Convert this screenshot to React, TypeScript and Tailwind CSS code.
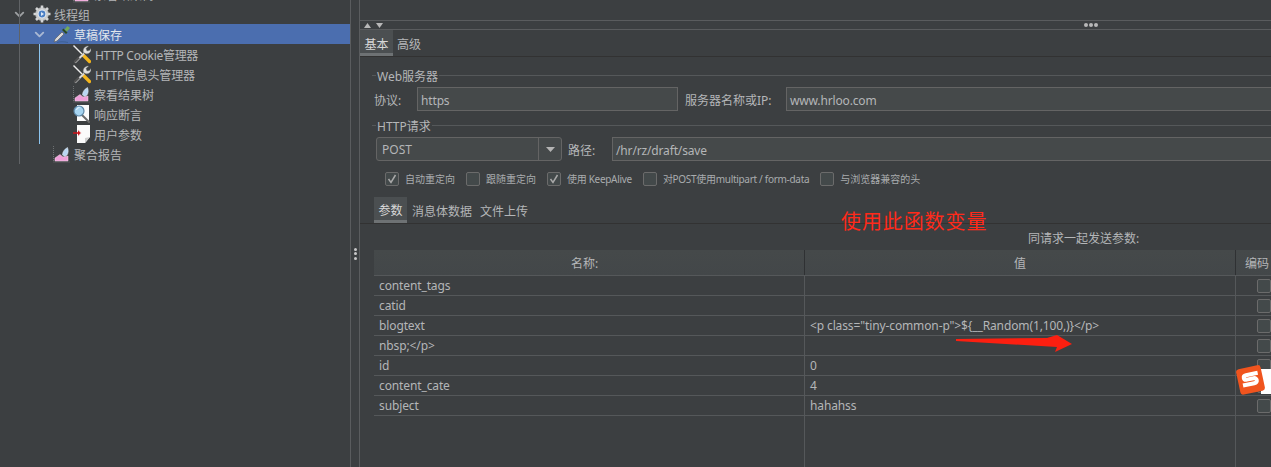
import { ChevronDown } from "lucide-react";

const font = "font-['Noto_Sans','Noto_Sans_CJK_SC',sans-serif]";

function GearIcon() {
  return (
    <svg width="18" height="18" viewBox="0 0 18 18">
      <circle cx="9" cy="9" r="6.6" fill="#c9cbcc" stroke="#8b8d8f" strokeWidth="0.6" />
      <g stroke="#d4d5d6" strokeWidth="2.6">
        <path d="M9 0.5v3M9 14.5v3M0.5 9h3M14.5 9h3M3 3l2 2M13 13l2 2M15 3l-2 2M5 13l-2 2" />
      </g>
      <circle cx="9" cy="9" r="4.4" fill="#e9eef4" />
      <circle cx="9" cy="9" r="3.4" fill="#4b7fc4" />
      <path d="M8 7l3 2-3 2z" fill="#dfe9f6" />
    </svg>
  );
}

function DropperIcon() {
  return (
    <svg width="18" height="18" viewBox="0 0 18 18">
      <path d="M1 17l1-3 7-7 2 2-7 7z" fill="#d8d8d8" stroke="#555" strokeWidth="0.6" />
      <path d="M9 5l4 4 1.5-1.5-4-4z" fill="#2e4a22" />
      <path d="M11.5 4.5l3-3.5 2.5 2-3 3.5z" fill="#72a85a" />
      <path d="M4 17.5c3-1 7-1 11 0" stroke="#3c5f94" fill="none" strokeWidth="1" />
    </svg>
  );
}

function ToolsIcon() {
  return (
    <svg width="18" height="19" viewBox="0 0 18 19">
      <path d="M0.500 0.500l9.500 9.500" stroke="#ececec" strokeWidth="1.400" />
      <path d="M10 10l6.500 6.500" stroke="#f3b51c" strokeWidth="3.200" strokeLinecap="round" />
      <path d="M8.500 10.500l2-2" stroke="#2b2b2b" strokeWidth="1.400" />
      <path d="M2 17.500l9-9" stroke="#d6d6d6" strokeWidth="2" />
      <path d="M1.500 17l4.500-4.500" stroke="#505050" strokeWidth="2.400" />
      <path d="M10.500 7.500c-1-3 1-6.500 5-6.500l-2.500 2.500 1 2.500 2.500-.5 1.500-2c.5 3.500-2.500 6-5.500 5z" fill="#dedede" stroke="#7c7c7c" strokeWidth="0.400" />
    </svg>
  );
}

function ChartIcon() {
  return (
    <svg width="18" height="18" viewBox="0 0 18 18">
      <path d="M0.500 1v16H17" stroke="#6d7072" strokeWidth="1" fill="none" strokeDasharray="1 1" />
      <path d="M2 16v-3l5-3.500 3 2.500 5-1v5z" fill="#ee9fd8" stroke="#f9d7ef" strokeWidth="0.500" />
      <path d="M9.500 10c0-3 1.500-5.500 5-7.500 1 2.500 1 5.500-.5 7.500-1.500 1.500-3 1.500-4.500 0z" fill="#b9d6f2" stroke="#e8f2fb" strokeWidth="0.500" />
    </svg>
  );
}

function SearchIcon() {
  return (
    <svg width="18" height="18" viewBox="0 0 18 18">
      <path d="M4 0h12v16H4z" fill="#fbfbfb" />
      <path d="M9 10l7 7" stroke="#6b6b6b" strokeWidth="2" strokeLinecap="round" />
      <circle cx="6" cy="6" r="5" fill="#a6d4f0" stroke="#5e87a6" strokeWidth="1.2" />
      <path d="M3.500 5a3 3 0 0 1 3-2.500" stroke="#eaf6fd" strokeWidth="1" fill="none" />
    </svg>
  );
}

function PageIcon() {
  return (
    <svg width="18" height="18" viewBox="0 0 18 18">
      <path d="M4 0h13v12l-5 6H4z" fill="#fbfbfb" />
      <path d="M17 12l-5 6v-5z" fill="#cfcfcf" />
      <path d="M0 8h6" stroke="#c8141c" strokeWidth="1.600" />
      <path d="M5 4.500l3.500 3.500L5 11.500z" fill="#e9b3b6" />
      <path d="M5 5.500l2.500 2.500L5 10.500z" fill="#c8141c" />
    </svg>
  );
}

function TreeRow({ pad, icon, label, active, chevron, gap }: { pad: string; icon: React.ReactNode; label: string; active?: boolean; chevron?: boolean; gap?: string }) {
  return (
    <div className={`flex h-5 items-center whitespace-nowrap text-[12px] text-[#b4b6b8] ${pad} ${active ? "bg-[#4b6eaf]" : ""}`}>
      {chevron && <ChevronDown size={15} strokeWidth={3} className={`mr-[6px] ${active ? "text-[#a9b8d3]" : "text-[#9da0a2]"}`} />}
      {icon}
      <span className={`pt-[4px] leading-4 ${gap ?? "ml-[3px]"} ${active ? "text-[#e2e6ec]" : ""}`}>{label}</span>
    </div>
  );
}

function Sidebar() {
  return (
    <div className="relative h-full w-[350px] shrink-0 overflow-hidden">
      <div className="-mt-4">
        <TreeRow pad="pl-[73px]" icon={<ChartIcon />} label="察看结果树" />
        <TreeRow pad="pl-[12px]" chevron icon={<GearIcon />} label="线程组" />
        <TreeRow pad="pl-[32px]" chevron active icon={<DropperIcon />} label="草稿保存" />
        <TreeRow pad="pl-[73px]" icon={<ToolsIcon />} label="HTTP Cookie管理器" gap="ml-[4px] tracking-[-0.300px]" />
        <TreeRow pad="pl-[73px]" icon={<ToolsIcon />} label="HTTP信息头管理器" gap="ml-[4px] tracking-[-0.200px]" />
        <TreeRow pad="pl-[73px]" icon={<ChartIcon />} label="察看结果树" />
        <TreeRow pad="pl-[73px]" icon={<SearchIcon />} label="响应断言" />
        <TreeRow pad="pl-[73px]" icon={<PageIcon />} label="用户参数" />
        <TreeRow pad="pl-[53px]" icon={<ChartIcon />} label="聚合报告" />
      </div>
      <div className="absolute left-[19px] top-0 h-[164px] w-px bg-[#606366]" />
      <div className="absolute left-[39px] top-[44px] h-[100px] w-px bg-[#8cc4ee]" />
    </div>
  );
}

function Splitter() {
  return (
    <div className="flex h-full w-[10px] shrink-0 items-center justify-center border-x border-[#5a5c5e]">
      <div className="flex translate-y-[20px] flex-col gap-[1.500px]">
        <span className="h-[3px] w-[3px] rounded-full bg-[#c8c8c8]" />
        <span className="h-[3px] w-[3px] rounded-full bg-[#c8c8c8]" />
        <span className="h-[3px] w-[3px] rounded-full bg-[#c8c8c8]" />
      </div>
    </div>
  );
}

function GroupTitle({ title }: { title: string }) {
  return (
    <div className="flex h-4 items-center">
      <div className="h-px w-[4px] bg-[#55585a]" />
      <span className="mx-[1px] pt-[4px] text-[12px] leading-4 text-[#b4b6b8]">{title}</span>
      <div className="h-px flex-1 bg-[#55585a]" />
    </div>
  );
}

function Field({ value, className }: { value: string; className: string }) {
  return (
    <div className={`flex h-[24px] items-center border border-r-0 border-[#646464] bg-[#45494a] pl-[3px] pt-[4px] text-[12px] tracking-[-0.150px] text-[#b4b6b8] ${className}`}>
      {value}
    </div>
  );
}

function Check({ label, checked, tight }: { label: string; checked?: boolean; tight?: boolean }) {
  return (
    <div className="flex h-[14px] items-center">
      <div className="flex h-[14px] w-[14px] items-center justify-center rounded-[2px] border border-[#6b6b6b] bg-[#43494a]">
        {checked && (
          <svg width="10" height="10" viewBox="0 0 10 10">
            <path d="M1.500 5l2.500 3.500L8.500 1" stroke="#a9a9a9" strokeWidth="1.500" fill="none" />
          </svg>
        )}
      </div>
      <span className={`ml-[6px] whitespace-nowrap pt-[1px] text-[10px] text-[#a9acae] ${tight ? "tracking-[-0.300px]" : ""}`}>{label}</span>
    </div>
  );
}

const rows = [
  ["content_tags", ""],
  ["catid", ""],
  ["blogtext", '<p class="tiny-common-p">${__Random(1,100,)}</p>'],
  ["nbsp;</p>", ""],
  ["id", "0"],
  ["content_cate", "4"],
  ["subject", "hahahss"],
];

function ParamTable() {
  return (
    <div className="flex-1 pl-[14px]">
      <div className="grid h-[26px] grid-cols-[431px_431px_1fr] border-b border-[#55585a] bg-gradient-to-b from-[#45494a] to-[#434749] text-[12px] text-[#b4b6b8]">
        <div className="flex items-center justify-center border-r border-[#2f3133] pr-[9px] pt-[2px]">名称:</div>
        <div className="flex items-center justify-center border-r border-[#2f3133] pt-[2px]">值</div>
        <div className="flex items-center whitespace-nowrap pl-[9px] pt-[2px]">编码</div>
      </div>
      {rows.map((row) => (
        <div key={row[0]} className="grid h-5 grid-cols-[431px_431px_1fr] border-b border-[#55585a] text-[12px] tracking-[-0.120px] text-[#b4b6b8]">
          <div className="flex items-center border-r border-[#55585a] pl-[5px]">{row[0]}</div>
          <div className="flex items-center whitespace-nowrap border-r border-[#55585a] pl-[5px]">{row[1]}</div>
          <div className="flex items-center pl-[21px]">
            <div className="h-[14px] w-[14px] shrink-0 rounded-[2px] border border-[#6b6b6b] bg-[#43494a]" />
          </div>
        </div>
      ))}
      <div className="grid h-[60px] grid-cols-[431px_431px_1fr]">
        <div className="border-r border-[#55585a]" />
        <div className="border-r border-[#55585a]" />
      </div>
    </div>
  );
}

function MainPanel() {
  return (
    <div className="relative flex h-full min-w-0 flex-1 flex-col overflow-hidden">
      <div className="h-[21px] shrink-0 border-b border-[#5a5c5e]" />
      <div className="relative flex h-[9px] shrink-0 items-center border-b border-[#5a5c5e] pl-[4px]">
        <svg width="26" height="7" viewBox="0 0 26 7" className="mr-auto">
          <path d="M0 6l3.500-5L7 6z" fill="#b8b8b8" />
          <path d="M12 1l3.500 5L19 1z" fill="#b8b8b8" />
        </svg>
        <div className="mr-[173px] flex gap-[1px]">
          <span className="h-[4px] w-[4px] rounded-full bg-[#b8b8b8]" />
          <span className="h-[4px] w-[4px] rounded-full bg-[#b8b8b8]" />
          <span className="h-[4px] w-[4px] rounded-full bg-[#b8b8b8]" />
        </div>
      </div>
      <div className="flex h-[27px] shrink-0 border-b border-[#323232] text-[12px] text-[#b4b6b8]">
        <div className="flex w-[33px] items-center justify-center border-b-[3px] border-[#6e7274] bg-[#4b4f51] pt-[6px] leading-4 text-[#d8d8d8]">基本</div>
        <div className="flex items-center pl-[4px] pt-[3px] leading-4">高级</div>
      </div>

      <div className="mt-[10px] pl-[12px]">
        <GroupTitle title="Web服务器" />
      </div>
      <div className="mt-[4px] flex items-center pl-[14px] text-[12px] text-[#b4b6b8]">
        <span className="w-[43px] shrink-0 pt-[4px]">协议:</span>
        <Field value="https" className="w-[261px] border-r!" />
        <span className="ml-[7px] w-[101px] shrink-0 whitespace-nowrap pt-[4px]">服务器名称或IP:</span>
        <Field value="www.hrloo.com" className="flex-1" />
      </div>

      <div className="mt-[6px] pl-[12px]">
        <GroupTitle title="HTTP请求" />
      </div>
      <div className="mt-[4px] flex items-center pl-[16px] text-[12px] text-[#b4b6b8]">
        <div className="flex h-[24px] w-[186px] shrink-0 items-center rounded-[3px] border border-[#646464] bg-[#45494a]">
          <span className="flex-1 pl-[5px] pt-[1px]">POST</span>
          <div className="flex h-full w-[23px] items-center justify-center border-l border-[#646464]">
            <svg width="9" height="5" viewBox="0 0 9 5">
              <path d="M0 0h9L4.500 5z" fill="#b4b4b4" />
            </svg>
          </div>
        </div>
        <span className="ml-[6px] w-[44px] shrink-0 pt-[3px]">路径:</span>
        <Field value="/hr/rz/draft/save" className="flex-1" />
      </div>

      <div className="mt-[11px] flex items-center gap-[11px] pl-[25px]">
        <Check checked label="自动重定向" />
        <Check label="跟随重定向" />
        <Check checked tight label="使用 KeepAlive" />
        <Check tight label="对POST使用multipart / form-data" />
        <Check label="与浏览器兼容的头" />
      </div>

      <div className="mt-[11px] flex h-[27px] shrink-0 border-b border-[#323232] pl-[14px] text-[12px] text-[#b4b6b8]">
        <div className="flex w-[33px] items-center justify-center border-b-[3px] border-[#6e7274] bg-[#4b4f51] pt-[5px] leading-4 text-[#d8d8d8]">参数</div>
        <div className="flex items-center pl-[5px] pt-[3px] leading-4">消息体数据</div>
        <div className="flex items-center pl-[8px] pt-[3px] leading-4">文件上传</div>
      </div>

      <div className="flex h-[26px] shrink-0 items-center pl-[668px] pt-[4px] text-[12px] text-[#b4b6b8]">同请求一起发送参数:</div>
      <ParamTable />

      <div className="absolute left-[481px] top-[208px] text-[20px] leading-[28px] tracking-[0.900px] text-[#ff2a1a]">使用此函数变量</div>
      <svg width="120" height="20" viewBox="0 0 120 20" className="absolute left-[595px] top-[334px]">
        <path d="M1 5L92 4 102 1 117 10 100 18 102 13 1 7z" fill="#fc1f10" />
      </svg>
      <svg width="35" height="32" viewBox="0 0 35 32" className="absolute left-[876px] top-[364px]">
        <path d="M25 5h10v25H25z" fill="#ffffff" />
        <g transform="rotate(-12 14 16)">
          <rect x="2" y="3" width="25" height="26" rx="3" fill="#f0541e" />
          <path d="M23 10.500H11c-3.500 0-3.500 4.500 0 4.500h7c3.500 0 3.500 5-.5 5H6" stroke="#ffffff" strokeWidth="4" fill="none" />
        </g>
      </svg>
    </div>
  );
}

export default function App() {
  return (
    <div className={`flex h-[467px] w-[1271px] overflow-hidden bg-[#3c3f41] ${font}`}>
      <Sidebar />
      <Splitter />
      <MainPanel />
    </div>
  );
}
